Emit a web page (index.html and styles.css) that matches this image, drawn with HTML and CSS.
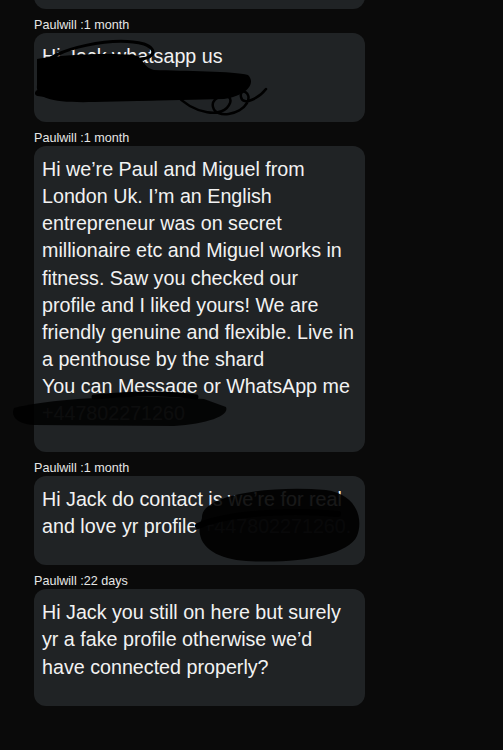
FILE: index.html
```html
<!DOCTYPE html>
<html lang="en">
<head>
    <meta charset="UTF-8">
    <meta name="viewport" content="width=device-width, initial-scale=1.0">
    <title>Messages</title>
    <link rel="stylesheet" href="styles.css">
</head>
<body>
    <div class="thread">
        <!-- previous message, scrolled off the top -->
        <div class="msg">
            <div class="bubble partial"></div>
        </div>

        <div class="msg">
            <div class="meta">Paulwill :1 month</div>
            <div class="bubble">
                Hi Jack whatsapp us<br>
                <span class="redacted">+447802271260</span>
                <svg class="scribble" width="331" height="89" viewBox="0 0 331 89">
                    <path d="M6 34 C 20 15, 80 3, 110 11 C 126 17, 120 28, 96 26" fill="none" stroke="#000" stroke-width="3" stroke-linecap="round"/>
                    <path d="M3 26 C 30 21, 80 20, 100 22 C 110 24, 108 34, 120 37 C 150 38, 200 38, 214 42 C 222 50, 214 62, 190 66 L 60 69 C 20 70, 1 66, 3 52 Z" fill="#000"/>
                    <path d="M4 60 C 40 66, 120 66, 200 60" fill="none" stroke="#000" stroke-width="6" stroke-linecap="round"/>
                    <path d="M140 60 C 160 82, 190 86, 196 70 C 200 58, 176 62, 179 74 C 182 86, 206 82, 213 70 C 219 59, 205 54, 207 64 C 209 74, 226 64, 232 56" fill="none" stroke="#000" stroke-width="2.5" stroke-linecap="round"/>
                </svg>
            </div>
        </div>

        <div class="msg">
            <div class="meta">Paulwill :1 month</div>
            <div class="bubble">
                Hi we’re Paul and Miguel from London Uk. I’m an English entrepreneur was on secret millionaire etc and Miguel works in fitness. Saw you checked our profile and I liked yours! We are friendly genuine and flexible. Live in a penthouse by the shard<br>
                You can Message or WhatsApp me<br>
                <span class="redacted">+447802271260</span>
                <svg class="scribble" width="331" height="306" viewBox="0 0 331 306">
                    <path d="M-20 262 C 20 252, 100 248, 170 253 L 192 261 C 196 270, 172 278, 140 280 L 0 279 C -20 278, -23 268, -20 262 Z" fill="#000" opacity="0.85"/>
                    <path d="M60 251 C 100 247, 140 247, 162 251" fill="none" stroke="#000" stroke-width="5" stroke-linecap="round"/>
                </svg>
            </div>
        </div>

        <div class="msg">
            <div class="meta">Paulwill :1 month</div>
            <div class="bubble">
                Hi Jack do contact is we’re for real and love yr profile <span class="redacted">+447802271260.</span>
                <svg class="scribble" width="331" height="89" viewBox="0 0 331 89">
                    <path d="M168 42 C 166 20, 232 9, 292 14 C 322 18, 330 42, 323 60 C 314 80, 262 88, 212 85 C 180 83, 158 68, 168 42 Z" fill="#000" opacity="0.9"/>
                    <path d="M164 50 C 190 38, 250 33, 304 38" fill="none" stroke="#000" stroke-width="6" stroke-linecap="round"/>
                </svg>
            </div>
        </div>

        <div class="msg">
            <div class="meta">Paulwill :22 days</div>
            <div class="bubble">Hi Jack you still on here but surely yr a fake profile otherwise we’d have connected properly?</div>
        </div>
    </div>
</body>
</html>
```

FILE: styles.css
```css
body {
    margin: 0;
    background: #0a0a0a;
    font-family: "Liberation Sans", Arial, sans-serif;
    overflow: hidden;
}

.thread {
    width: 331px;
    margin-left: 34px;
    margin-top: -53px;
    display: flex;
    flex-direction: column;
    gap: 9px;
}

.meta {
    font-size: 12.6px;
    line-height: 15px;
    color: #e6e6e6;
}

.bubble {
    position: relative;
    background: #202325;
    border-radius: 12px;
    padding: 10px 10px 25px 8px;
    font-size: 19.7px;
    line-height: 27.1px;
    color: #f2f2f2;
}

.bubble.partial {
    height: 62px;
    padding: 0;
}

.redacted {
    color: #55585b;
}

.scribble {
    position: absolute;
    left: 0;
    top: 0;
    overflow: visible;
    pointer-events: none;
}
```
